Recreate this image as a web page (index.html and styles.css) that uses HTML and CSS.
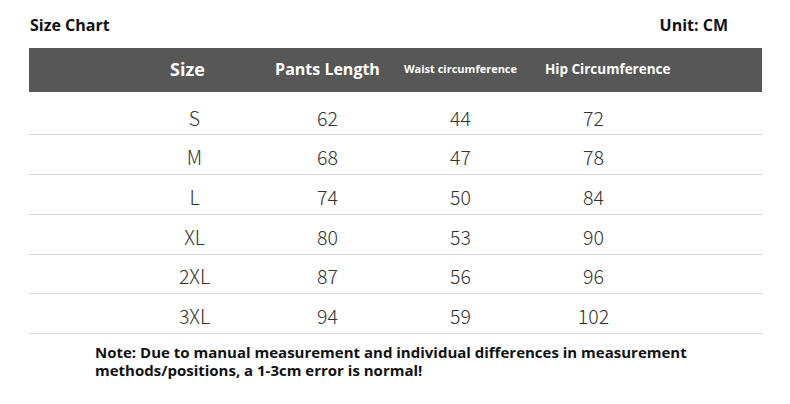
FILE: index.html
```html
<!DOCTYPE html>
<html>
<head>
<meta charset="utf-8">
<link rel="stylesheet" href="styles.css">
</head>
<body>
<div class="page">
  <div class="top">
    <div class="title">Size Chart</div>
    <div class="unit">Unit: CM</div>
  </div>
  <div class="head">
    <div></div>
    <div class="h h-size">Size</div>
    <div class="h h-pants">Pants Length</div>
    <div class="h h-waist">Waist circumference</div>
    <div class="h h-hip">Hip Circumference</div>
    <div></div>
  </div>
  <div class="rows">
    <div class="row"><div></div><div class="c">S</div><div class="c">62</div><div class="c">44</div><div class="c">72</div><div></div></div>
    <div class="row"><div></div><div class="c">M</div><div class="c">68</div><div class="c">47</div><div class="c">78</div><div></div></div>
    <div class="row"><div></div><div class="c">L</div><div class="c">74</div><div class="c">50</div><div class="c">84</div><div></div></div>
    <div class="row"><div></div><div class="c">XL</div><div class="c">80</div><div class="c">53</div><div class="c">90</div><div></div></div>
    <div class="row"><div></div><div class="c">2XL</div><div class="c">87</div><div class="c">56</div><div class="c">96</div><div></div></div>
    <div class="row"><div></div><div class="c">3XL</div><div class="c">94</div><div class="c">59</div><div class="c">102</div><div></div></div>
  </div>
  <div class="note">Note: Due to manual measurement and individual differences in measurement<br>methods/positions, a 1-3cm error is normal!</div>
</div>
</body>
</html>
```

FILE: styles.css
```css
html, body {
  margin: 0;
  padding: 0;
  background: #ffffff;
}
.page {
  width: 790px;
  height: 404px;
  padding: 0 28px 0 29px;
  box-sizing: border-box;
  font-family: "Open Sans", "Noto Sans", sans-serif;
  color: #111;
}
.top {
  display: flex;
  justify-content: space-between;
  align-items: center;
  height: 48px;
  padding: 0 34px 0 1px;
}
.title, .unit {
  font-weight: 700;
  font-size: 16px;
  margin-top: 1px;
}
.head {
  display: grid;
  grid-template-columns: 99px repeat(4, 133px) 1fr;
  align-items: center;
  height: 44px;
  background: #575757;
  color: #ffffff;
  font-weight: 700;
}
.h {
  text-align: center;
  white-space: nowrap;
  margin-top: -2px;
}
.h-size { font-size: 18px; padding-right: 14px; }
.h-pants { font-size: 16px; }
.h-waist { font-size: 11px; margin-top: -4px; }
.h-hip { font-size: 13.5px; padding-left: 18px; }
.rows {
  margin-top: 3px;
}
.row {
  display: grid;
  grid-template-columns: 99px repeat(4, 133px) 1fr;
  height: 40px;
  box-sizing: border-box;
  border-bottom: 1px solid #d6d6d6;
  align-items: center;
  padding-top: 4px;
}
.row:first-child {
  padding-top: 7px;
}
.row:nth-child(5) {
  height: 39px;
}
.c {
  text-align: center;
  font-family: "Noto Sans CJK SC", "Noto Sans", sans-serif;
  font-weight: 300;
  font-size: 19.5px;
  color: #333;
  line-height: 24px;
}
.note {
  margin: 9px 0 0 66px;
  font-weight: 700;
  font-size: 15px;
  line-height: 18px;
  color: #111;
}
```
